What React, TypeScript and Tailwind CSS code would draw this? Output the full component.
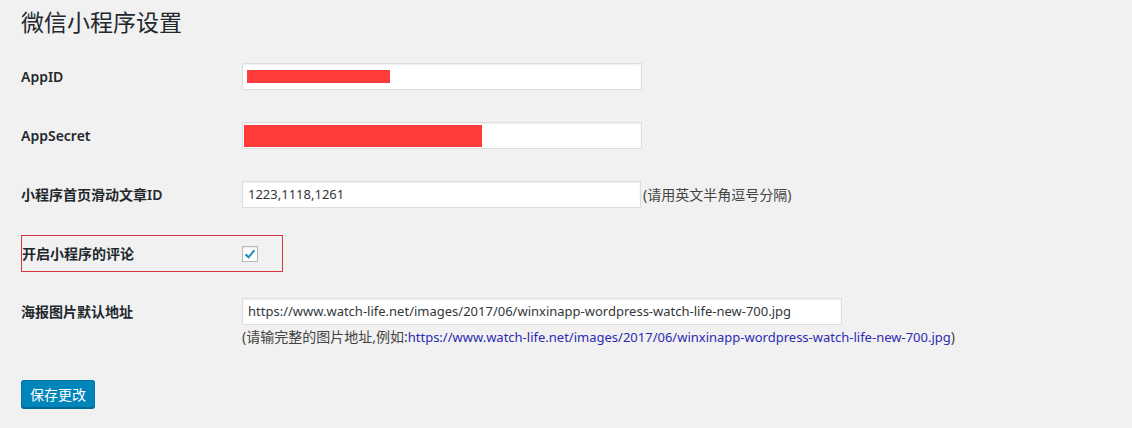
import React from "react";

const font = { fontFamily: '"Noto Sans", "Noto Sans CJK SC", sans-serif' };

function Input({ children, w = "w-[400px]" }: { children?: React.ReactNode; w?: string }) {
  return (
    <div className={`${w} h-[27px] bg-white border border-[#dddddd] shadow-[inset_0_1px_2px_rgba(0,0,0,0.07)] flex items-center px-[5px] text-[13px] text-[#32373c]`}>
      {children}
    </div>
  );
}

export default function App() {
  const url = "https://www.watch-life.net/images/2017/06/winxinapp-wordpress-watch-life-new-700.jpg";
  return (
    <div className="w-[1132px] h-[428px] bg-[#f1f1f1] text-[#23282d] overflow-hidden" style={font}>
      <div className="pl-[21px]">
        <div className="h-[47px] flex items-center text-[23px] font-normal text-[#23282d] leading-none pb-[2px]">微信小程序设置</div>

        <div className="h-[59px] flex items-center">
          <div className="w-[221px] text-[14px] font-semibold">AppID</div>
          <Input>
            <div className="w-[143px] h-[13px] bg-[#ff3b3b] -ml-[1px]" />
          </Input>
        </div>

        <div className="h-[59px] flex items-center">
          <div className="w-[221px] text-[14px] font-semibold">AppSecret</div>
          <Input>
            <div className="w-[238px] h-[22px] bg-[#ff3b3b] -ml-[4px]" />
          </Input>
        </div>

        <div className="h-[59px] flex items-center">
          <div className="w-[221px] text-[14px] font-semibold">小程序首页滑动文章ID</div>
          <Input w="w-[399px]">1223,1118,1261</Input>
          <span className="text-[14px] text-[#444] ml-[2px]">(请用英文半角逗号分隔)</span>
        </div>

        <div className="h-[59px] flex items-center">
          <div className="w-[262px] h-[37px] border border-[#d9363e] flex items-center">
            <div className="w-[220px] text-[14px] font-semibold">开启小程序的评论</div>
            <div className="w-[16px] h-[16px] bg-white border border-[#b4b9be] shadow-[inset_0_1px_2px_rgba(0,0,0,0.1)] flex items-center justify-center">
              <svg width="14" height="14" viewBox="0 0 14 14">
                <path d="M2.5 7.2 L5.6 10.2 L11.5 3.2" fill="none" stroke="#1e8cbe" strokeWidth="2" />
              </svg>
            </div>
          </div>
        </div>

        <div className="flex pt-[15px]">
          <div className="w-[221px] h-[27px] flex items-center text-[14px] font-semibold">海报图片默认地址</div>
          <div className="flex flex-col">
            <Input w="w-[600px]">{url}</Input>
            <div className="text-[14px] text-[#444] mt-[1px] leading-[22px]">
              (请输完整的图片地址,例如:<span className="text-[13px] text-[#2b2bb3]">{url}</span>)
            </div>
          </div>
        </div>

        <div className="mt-[32px]">
          <button className="h-[28px] w-[74px] bg-[#0085ba] border border-[#0073aa] border-b-[#006799] rounded-[3px] shadow-[0_1px_0_#006799] text-white text-[14px] flex items-center justify-center">
            保存更改
          </button>
        </div>
      </div>
    </div>
  );
}
